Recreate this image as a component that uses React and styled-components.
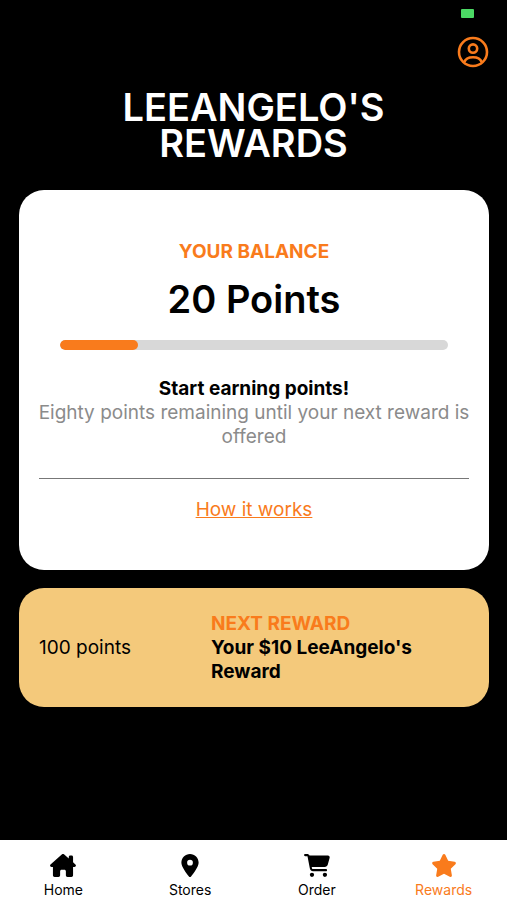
import React from "react";
import styled, { createGlobalStyle } from "styled-components";
import {
  FaHouseChimney,
  FaLocationDot,
  FaCartShopping,
  FaStar,
} from "react-icons/fa6";

const ORANGE = "#f97b1c";

const GlobalStyle = createGlobalStyle`
  *, *::before, *::after { box-sizing: border-box; }
  body {
    margin: 0;
    background: #000;
    font-family: Inter, "Liberation Sans", sans-serif;
    font-size: 19px;
    line-height: 24px;
  }
  h1, h2, p { margin: 0; }
`;

const Screen = styled.div`
  display: flex;
  flex-direction: column;
  min-height: 100vh;
  background: #000;
`;

const StatusBar = styled.div`
  display: flex;
  justify-content: flex-end;
  padding: 9px 33px 0 0;
`;

const Indicator = styled.span`
  width: 13px;
  height: 9px;
  border-radius: 1px;
  background: #4bd964;
`;

const TopBar = styled.header`
  display: flex;
  justify-content: flex-end;
  padding: 18px 18px 0;
`;

const ProfileButton = styled.button`
  display: flex;
  padding: 0;
  border: 0;
  background: none;
  color: ${ORANGE};
  cursor: pointer;
`;

const Title = styled.h1`
  padding: 21px 100px 0;
  color: #fff;
  font-size: 38px;
  font-weight: 600;
  line-height: 36px;
  text-align: center;
`;

const Content = styled.main`
  display: flex;
  flex: 1;
  flex-direction: column;
  gap: 18px;
  padding: 29px 18px 30px 19px;
`;

const BalanceCard = styled.section`
  padding: 50px 16px 48px;
  border-radius: 25px;
  background: #fff;
  text-align: center;
`;

const Eyebrow = styled.h2`
  color: ${ORANGE};
  font-size: 19px;
  font-weight: 700;
  line-height: 24px;
`;

const Points = styled.p`
  margin-top: 11px;
  font-size: 38px;
  font-weight: 600;
  line-height: 48px;
`;

const Progress = styled.div`
  height: 10px;
  margin: 17px 25px 0;
  overflow: hidden;
  border-radius: 5px;
  background: #d8d8d8;
`;

const ProgressFill = styled.div`
  height: 100%;
  border-radius: 5px;
  background: ${ORANGE};
`;

const Lead = styled.p`
  margin-top: 27px;
  font-weight: 700;
`;

const Note = styled.p`
  color: #8b8b8b;
`;

const Divider = styled.hr`
  height: 1px;
  margin: 29px 4px 19px;
  border: 0;
  background: #777;
`;

const TextLink = styled.a`
  color: ${ORANGE};
  text-decoration: underline;
`;

const RewardCard = styled.section`
  display: grid;
  grid-template-columns: 2fr 3fr;
  align-items: center;
  padding: 24px 20px 23px;
  border-radius: 25px;
  background: #f4c97b;
`;

const RewardName = styled.p`
  font-weight: 700;
`;

const TabBar = styled.nav`
  display: flex;
  padding: 14px 0 0;
  height: 60px;
  background: #fff;
`;

const Tab = styled.a`
  display: flex;
  flex: 1;
  flex-direction: column;
  align-items: center;
  gap: 3px;
  color: ${(p) => (p.$active ? ORANGE : "#000")};
  font-size: 14px;
  line-height: 20px;
  text-decoration: none;

  svg { width: 26px; height: 25px; }
`;

function ProfileIcon() {
  return (
    <svg width="32" height="32" viewBox="0 0 32 32" fill="none" stroke="currentColor" strokeWidth="2.6" aria-hidden="true">
      <circle cx="16" cy="16" r="14" />
      <circle cx="16" cy="12.6" r="4.2" />
      <path d="M7.4 26.2C8.4 22.8 11.6 21.2 16 21.2s7.6 1.600 8.600 5" />
    </svg>
  );
}

const tabs = [
  { label: "Home", Icon: FaHouseChimney },
  { label: "Stores", Icon: FaLocationDot },
  { label: "Order", Icon: FaCartShopping },
  { label: "Rewards", Icon: FaStar, active: true },
];

export default function App() {
  const progress = 20;
  return (
    <Screen>
      <GlobalStyle />
      <StatusBar>
        <Indicator />
      </StatusBar>
      <TopBar>
        <ProfileButton type="button" aria-label="Profile">
          <ProfileIcon />
        </ProfileButton>
      </TopBar>
      <Title>LEEANGELO'S REWARDS</Title>
      <Content>
        <BalanceCard>
          <Eyebrow>YOUR BALANCE</Eyebrow>
          <Points>20 Points</Points>
          <Progress role="progressbar" aria-label="Points toward reward" aria-valuenow={progress} aria-valuemin={0} aria-valuemax={100}>
            <ProgressFill style={{ width: `${progress}%` }} />
          </Progress>
          <Lead>Start earning points!</Lead>
          <Note>Eighty points remaining until your next reward is offered</Note>
          <Divider />
          <TextLink href="#how-it-works">How it works</TextLink>
        </BalanceCard>
        <RewardCard>
          <p>100 points</p>
          <div>
            <Eyebrow>NEXT REWARD</Eyebrow>
            <RewardName>Your $10 LeeAngelo's Reward</RewardName>
          </div>
        </RewardCard>
      </Content>
      <TabBar aria-label="Main">
        {tabs.map(({ label, Icon, active }) => (
          <Tab key={label} href={`#${label.toLowerCase()}`} $active={active} aria-current={active ? "page" : undefined}>
            <Icon aria-hidden="true" />
            {label}
          </Tab>
        ))}
      </TabBar>
    </Screen>
  );
}
